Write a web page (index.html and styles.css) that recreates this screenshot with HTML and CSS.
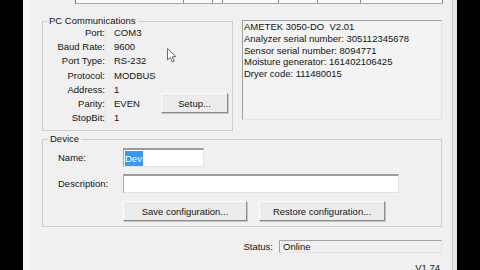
FILE: index.html
```html
<!DOCTYPE html>
<html>
<head>
<meta charset="utf-8">
<link rel="stylesheet" href="styles.css">
</head>
<body>
<div class="screen">
  <div class="window">
    <div class="table-edge">
      <span class="col c1"></span><span class="col c2"></span><span class="col c3"></span><span class="col c4"></span><span class="col c5"></span><span class="col c6"></span><span class="col c7"></span>
    </div>
    <div class="content">
      <div class="top-row">
        <fieldset class="group pc">
          <legend>PC Communications</legend>
          <div class="pc-grid">
            <span class="lbl">Port:</span><span class="val">COM3</span>
            <span class="lbl">Baud Rate:</span><span class="val">9600</span>
            <span class="lbl">Port Type:</span><span class="val">RS-232</span>
            <span class="lbl">Protocol:</span><span class="val">MODBUS</span>
            <span class="lbl">Address:</span><span class="val">1</span>
            <span class="lbl">Parity:</span><span class="val">EVEN</span>
            <span class="lbl">StopBit:</span><span class="val">1</span>
            <button class="btn setup">Setup...</button>
          </div>
        </fieldset>
        <div class="info">
          <div>AMETEK 3050-DO&nbsp; V2.01</div>
          <div>Analyzer serial number: 305112345678</div>
          <div>Sensor serial number: 8094771</div>
          <div>Moisture generator: 161402106425</div>
          <div>Dryer code: 111480015</div>
        </div>
      </div>
      <fieldset class="group device">
        <legend>Device</legend>
        <div class="dev-grid">
          <span class="dlbl">Name:</span>
          <div class="textbox name"><span class="sel">Dev</span></div>
          <span class="dlbl">Description:</span>
          <div class="textbox desc"></div>
          <div class="buttons">
            <button class="btn save">Save configuration...</button>
            <button class="btn restore">Restore configuration...</button>
          </div>
        </div>
      </fieldset>
      <div class="status-row">
        <span class="status-lbl">Status:</span>
        <div class="status-box">Online</div>
      </div>
      <div class="version">V1.74</div>
    </div>
    <svg class="cursor" width="11" height="16" viewBox="0 0 11 16">
      <path d="M0.5 0.5 L0.5 12 L3.3 9.3 L5.3 14 L7.2 13.2 L5.3 8.7 L9 8.7 Z" fill="#fff" stroke="#6a6a6a" stroke-width="1" stroke-linejoin="round"/>
    </svg>
  </div>
</div>
</body>
</html>
```

FILE: styles.css
```css
* { box-sizing: border-box; }
html, body {
  margin: 0;
  padding: 0;
  width: 480px;
  height: 270px;
  overflow: hidden;
  background: #000;
}
body {
  font-family: "Liberation Sans", Arial, sans-serif;
  font-size: 9.5px;
  color: #141414;
}
.screen {
  display: flex;
  width: 480px;
  height: 270px;
}
.window {
  position: relative;
  margin-left: 23px;
  width: 434px;
  height: 270px;
  background: #f0f0f0;
  border-left: 7px solid #f6f6f6;
  border-right: 4px solid #e8e8e8;
  box-shadow: inset -1px 0 0 #c8c8c8;
}
.table-edge {
  position: relative;
  margin-left: 45px;
  width: 368px;
  height: 4px;
  background: #fbfbfb;
  border-left: 1px solid #707070;
  border-bottom: 1px solid #a8a8a8;
}
.col {
  position: absolute;
  top: 0;
  width: 1px;
  height: 3px;
  background: #8a8a8a;
}
.c1 { left: 107px; }
.c2 { left: 136px; }
.c3 { left: 146px; }
.c4 { left: 202px; }
.c5 { left: 241px; }
.c6 { left: 284px; }
.c7 { left: 366px; }
.content {
  padding-left: 12px;
  width: 412px;
  display: flex;
  flex-direction: column;
}
.top-row {
  display: flex;
  align-items: flex-start;
  gap: 9px;
  margin-top: 12px;
}
.group {
  margin: 0;
  border: 1px solid #cdcdcd;
  min-width: 0;
}
.group legend {
  padding: 0 2px;
  line-height: 10px;
  height: 10px;
}
.pc {
  width: 191px;
  padding: 0 4px 5px 4px;
}
.pc-grid {
  margin-top: -1px;
  margin-left: 2px;
  display: grid;
  grid-template-columns: 56px 38px 67px;
  column-gap: 9px;
  grid-auto-rows: 14.3px;
  align-items: center;
  white-space: nowrap;
}
.lbl { grid-column: 1; text-align: right; }
.val { grid-column: 2; }
.btn {
  font-family: inherit;
  font-size: 9.5px;
  color: #141414;
  background: #ececec;
  border: 1px solid;
  border-color: #fdfdfd #8c8c8c #8c8c8c #fdfdfd;
  box-shadow: 1px 1px 0 #c4c4c4;
  padding: 0;
  height: 20px;
  white-space: nowrap;
}
.setup {
  grid-column: 3;
  grid-row: 5 / span 2;
  align-self: end;
  margin-bottom: -2.5px;
  width: 67px;
}
.info {
  margin-top: 4px;
  width: 200px;
  height: 100px;
  background: #f3f3f3;
  border: 1px solid;
  border-color: #a0a0a0 #e4e4e4 #e4e4e4 #a0a0a0;
  padding: 0 0 0 1px;
  line-height: 11.75px;
  white-space: nowrap;
}
.device {
  margin-top: 3px;
  width: 400px;
  padding: 4px 4px 5px 5px;
}
.dev-grid {
  margin-left: 10px;
  display: grid;
  grid-template-columns: 65px auto;
  row-gap: 7px;
  align-items: center;
}
.dlbl { grid-column: 1; }
.textbox {
  grid-column: 2;
  height: 19px;
  background: #fff;
  border-style: solid;
  border-width: 2px 1px 1px 1px;
  border-color: #9c9c9c #e2e2e2 #e2e2e2 #a8a8a8;
  padding: 0 0 0 1px;
  display: flex;
  align-items: center;
}
.name { width: 81px; }
.desc { width: 276px; }
.sel {
  background: #3399ff;
  color: #fff;
  line-height: 15px;
  padding: 0 1px 0 0;
}
.buttons {
  grid-column: 2;
  display: flex;
  gap: 12px;
  margin-top: 1px;
}
.save { width: 124px; }
.restore { width: 126px; }
.status-row {
  margin-top: 13px;
  display: flex;
  justify-content: flex-end;
  align-items: center;
  gap: 6px;
}
.status-box {
  width: 163px;
  height: 13px;
  border: 1px solid;
  border-color: #a0a0a0 #e4e4e4 #e4e4e4 #a0a0a0;
  padding-left: 3px;
  line-height: 11px;
}
.version {
  margin-top: 9px;
  text-align: right;
  padding-right: 2px;
  line-height: 11px;
}
.cursor {
  position: absolute;
  left: 137px;
  top: 48px;
}
```
